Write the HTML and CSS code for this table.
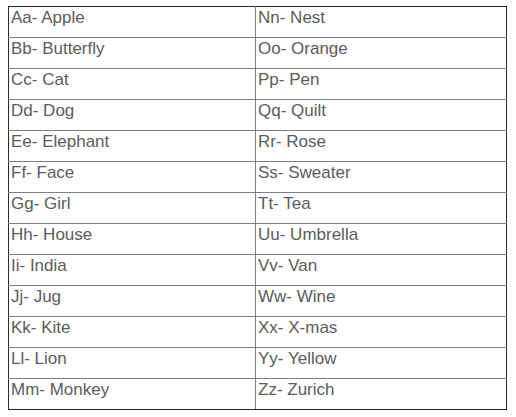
FILE: index.html
```html
<!DOCTYPE html>
<html>
<head>
<meta charset="utf-8">
<link rel="stylesheet" href="styles.css">
</head>
<body>
<table class="abc">
<tr><td>Aa- Apple</td><td>Nn- Nest</td></tr>
<tr><td>Bb- Butterfly</td><td>Oo- Orange</td></tr>
<tr><td>Cc- Cat</td><td>Pp- Pen</td></tr>
<tr><td>Dd- Dog</td><td>Qq- Quilt</td></tr>
<tr><td>Ee- Elephant</td><td>Rr- Rose</td></tr>
<tr><td>Ff- Face</td><td>Ss- Sweater</td></tr>
<tr><td>Gg- Girl</td><td>Tt- Tea</td></tr>
<tr><td>Hh- House</td><td>Uu- Umbrella</td></tr>
<tr><td>Ii- India</td><td>Vv- Van</td></tr>
<tr><td>Jj- Jug</td><td>Ww- Wine</td></tr>
<tr><td>Kk- Kite</td><td>Xx- X-mas</td></tr>
<tr><td>Ll- Lion</td><td>Yy- Yellow</td></tr>
<tr><td>Mm- Monkey</td><td>Zz- Zurich</td></tr>
</table>
</body>
</html>
```
FILE: styles.css
```css
body {
  margin: 6px 8px;
  background: #fff;
  font-family: "Liberation Sans", Arial, sans-serif;
}
.abc {
  border-collapse: collapse;
  width: 499px;
  border: 1px solid #2b2b2b;
  table-layout: fixed;
}
.abc td {
  border: 1px solid #808080;
  height: 31px;
  box-sizing: border-box;
  padding: 1px 2px 0;
  vertical-align: top;
  font-size: 17px;
  line-height: 19px;
  color: #5c5c5c;
}
.abc td:first-child {
  width: 247px;
  border-left: 1px solid #2b2b2b;
}
.abc td:last-child {
  border-right: 1px solid #2b2b2b;
}
.abc tr:first-child td {
  border-top: 1px solid #2b2b2b;
}
.abc tr:last-child td {
  border-bottom: 1px solid #2b2b2b;
}
```
